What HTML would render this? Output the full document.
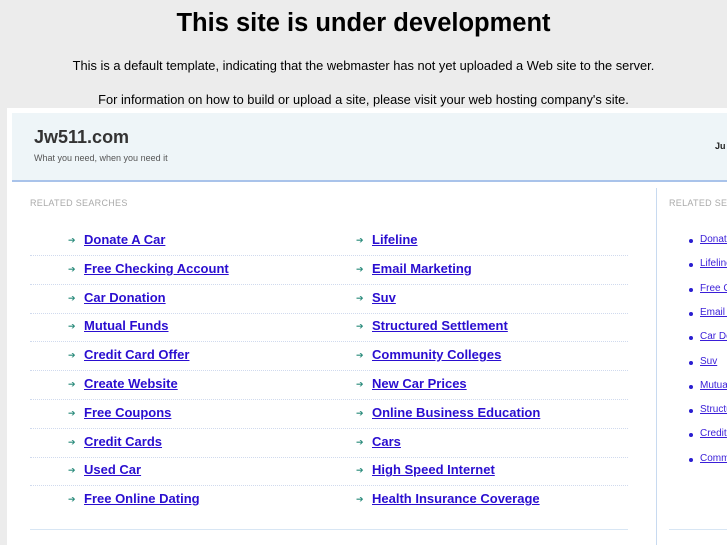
<!DOCTYPE html>
<html><head><meta charset="utf-8"><style>
body{margin:0;width:727px;height:545px;overflow:hidden;background:#ececec;font-family:"Liberation Sans",Arial,sans-serif;position:relative}
.a{position:absolute;white-space:nowrap}
h1{position:absolute;top:9px;left:0;width:727px;text-align:center;margin:0;font-size:25.5px;font-weight:bold;color:#000}
.t{left:0;width:727px;text-align:center;font-size:12.85px;color:#000}
.box{left:7px;top:108px;width:720px;height:437px;background:#fff}
.hdr{left:12px;top:113px;width:715px;height:67px;background:#eef5f8;border-bottom:2px solid #a9c3ea}
.rs{font-size:9px;color:#aaa;letter-spacing:.3px}
.l{font-size:13px;font-weight:bold;color:#2a0ed0;text-decoration:underline}
.ar{color:#2b8c7c;font-size:9px}
.dl{left:30px;width:598px;border-top:1px dotted #d0daee}
.sl{font-size:10px;color:#3a1ed8;text-decoration:underline}
.bu{width:4px;height:4px;border-radius:2px;background:#2a1ed0}
</style></head><body>
<h1>This site is under development</h1>
<div class="a t" style="top:58px">This is a default template, indicating that the webmaster has not yet uploaded a Web site to the server.</div>
<div class="a t" style="top:92px">For information on how to build or upload a site, please visit your web hosting company's site.</div>
<div class="a box"></div>
<div class="a hdr"></div>
<div class="a" style="left:34px;top:127px;font-size:18px;font-weight:bold;color:#333">Jw511.com</div>
<div class="a" style="left:34px;top:153px;font-size:9px;color:#555">What you need, when you need it</div>
<div class="a" style="left:715px;top:141px;font-size:9px;color:#222;font-weight:bold">Ju</div>
<div class="a rs" style="left:30px;top:198px">RELATED SEARCHES</div>
<div class="a rs" style="left:669px;top:198px">RELATED SEARCHES</div>
<div class="a" style="left:656px;top:188px;height:357px;border-left:1px solid #c8daf0"></div>
<div class="a" style="left:30px;top:529px;width:598px;border-top:1px solid #d8e6f4"></div>
<div class="a" style="left:669px;top:529px;width:58px;border-top:1px solid #d8e6f4"></div>
<div id="rows"></div>
<script>
var L=["Donate A Car","Free Checking Account","Car Donation","Mutual Funds","Credit Card Offer","Create Website","Free Coupons","Credit Cards","Used Car","Free Online Dating"];
var R=["Lifeline","Email Marketing","Suv","Structured Settlement","Community Colleges","New Car Prices","Online Business Education","Cars","High Speed Internet","Health Insurance Coverage"];
var S=["Donate A Car","Lifeline","Free Checking","Email Marketing","Car Donation","Suv","Mutual Funds","Structured","Credit Card","Community"];
var h="";
for(var i=0;i<10;i++){var y=232+i*28.8;
h+='<div class="a ar" style="left:68px;top:'+(y+3)+'px">&#10132;</div><div class="a l" style="left:84px;top:'+y+'px">'+L[i]+'</div>';
h+='<div class="a ar" style="left:356px;top:'+(y+3)+'px">&#10132;</div><div class="a l" style="left:372px;top:'+y+'px">'+R[i]+'</div>';
if(i<9)h+='<div class="a dl" style="top:'+(y+23)+'px"></div>';
var z=234+i*24.3;
h+='<div class="a bu" style="left:689px;top:'+(z+5)+'px"></div><div class="a sl" style="left:700px;top:'+z+'px">'+S[i]+'</div>';}
document.getElementById("rows").innerHTML=h;
</script>
</body></html>
